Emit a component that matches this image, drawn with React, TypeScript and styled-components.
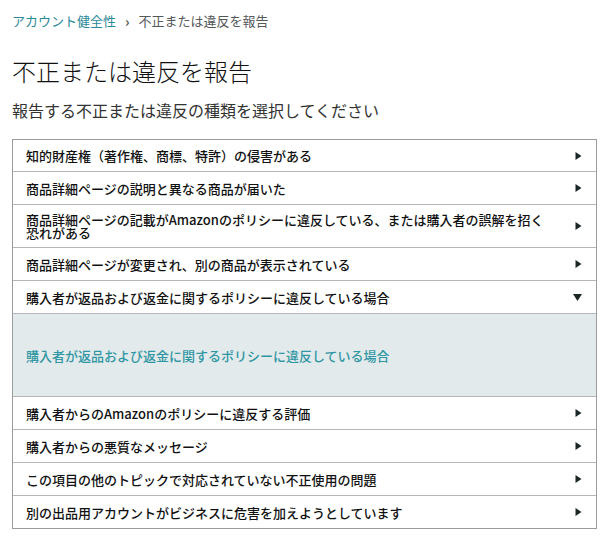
import React from 'react';
import styled, { createGlobalStyle } from 'styled-components';

const GlobalStyle = createGlobalStyle`
  html, body {
    margin: 0;
    padding: 0;
    background: #ffffff;
  }
  body {
    font-family: "Noto Sans CJK JP", "Noto Sans", sans-serif;
    color: #111111;
  }
`;

const Page = styled.div`
  padding: 12px 14px 0 12px;
  width: 611px;
  box-sizing: border-box;
`;

const Breadcrumb = styled.nav`
  display: flex;
  align-items: center;
  gap: 9px;
  font-size: 13px;
  line-height: 18px;
  color: #565959;
`;

const CrumbLink = styled.a`
  color: #2a8a96;
  text-decoration: none;
`;

const Chevron = styled.span`
  color: #565959;
  font-size: 14px;
  font-weight: 700;
`;

const Title = styled.h1`
  margin: 25px 0 0;
  font-size: 24px;
  line-height: 32px;
  font-weight: 300;
  color: #111111;
`;

const Subtitle = styled.p`
  margin: 12px 0 0;
  font-size: 16px;
  line-height: 22px;
  color: #333333;
`;

const List = styled.div`
  margin-top: 18px;
  border: 1px solid #9a9c9c;
  width: 585px;
  box-sizing: border-box;
`;

const Row = styled.div`
  display: flex;
  align-items: center;
  min-height: 33px;
  padding: 8px 14px 8px 13px;
  box-sizing: border-box;
  border-top: 1px solid #b4b7b7;
  &:first-child {
    border-top: none;
    min-height: 31px;
  }
`;

const Label = styled.span`
  flex: 1;
  max-width: 522px;
  font-size: 13px;
  line-height: 13px;
  font-weight: 500;
  color: #111111;
`;

const Arrow = styled.svg`
  margin-left: auto;
  flex-shrink: 0;
`;

const Panel = styled.div`
  display: flex;
  align-items: center;
  height: 83px;
  padding: 0 13px;
  box-sizing: border-box;
  background: #e3eaeb;
  border-top: 1px solid #b4b7b7;
  font-size: 13px;
  font-weight: 500;
  color: #2f96a4;
`;

const RightArrow = () => (
  <Arrow width="7" height="8" viewBox="0 0 7 8">
    <path d="M0.5 0 L6.5 4 L0.5 8 Z" fill="#1b2626" />
  </Arrow>
);

const DownArrow = () => (
  <Arrow width="9" height="7" viewBox="0 0 9 7">
    <path d="M0 0 L9 0 L4.5 7 Z" fill="#1b2626" />
  </Arrow>
);

const before = [
  '知的財産権（著作権、商標、特許）の侵害がある',
  '商品詳細ページの説明と異なる商品が届いた',
  '商品詳細ページの記載がAmazonのポリシーに違反している、または購入者の誤解を招く恐れがある',
  '商品詳細ページが変更され、別の商品が表示されている',
];

const opened = '購入者が返品および返金に関するポリシーに違反している場合';

const after = [
  '購入者からのAmazonのポリシーに違反する評価',
  '購入者からの悪質なメッセージ',
  'この項目の他のトピックで対応されていない不正使用の問題',
  '別の出品用アカウントがビジネスに危害を加えようとしています',
];

export default function App() {
  return (
    <>
      <GlobalStyle />
      <Page>
        <Breadcrumb>
          <CrumbLink href="#">アカウント健全性</CrumbLink>
          <Chevron>›</Chevron>
          <span>不正または違反を報告</span>
        </Breadcrumb>
        <Title>不正または違反を報告</Title>
        <Subtitle>報告する不正または違反の種類を選択してください</Subtitle>
        <List>
          {before.map((t) => (
            <Row key={t}>
              <Label>{t}</Label>
              <RightArrow />
            </Row>
          ))}
          <Row>
            <Label>{opened}</Label>
            <DownArrow />
          </Row>
          <Panel>{opened}</Panel>
          {after.map((t) => (
            <Row key={t}>
              <Label>{t}</Label>
              <RightArrow />
            </Row>
          ))}
        </List>
      </Page>
    </>
  );
}
